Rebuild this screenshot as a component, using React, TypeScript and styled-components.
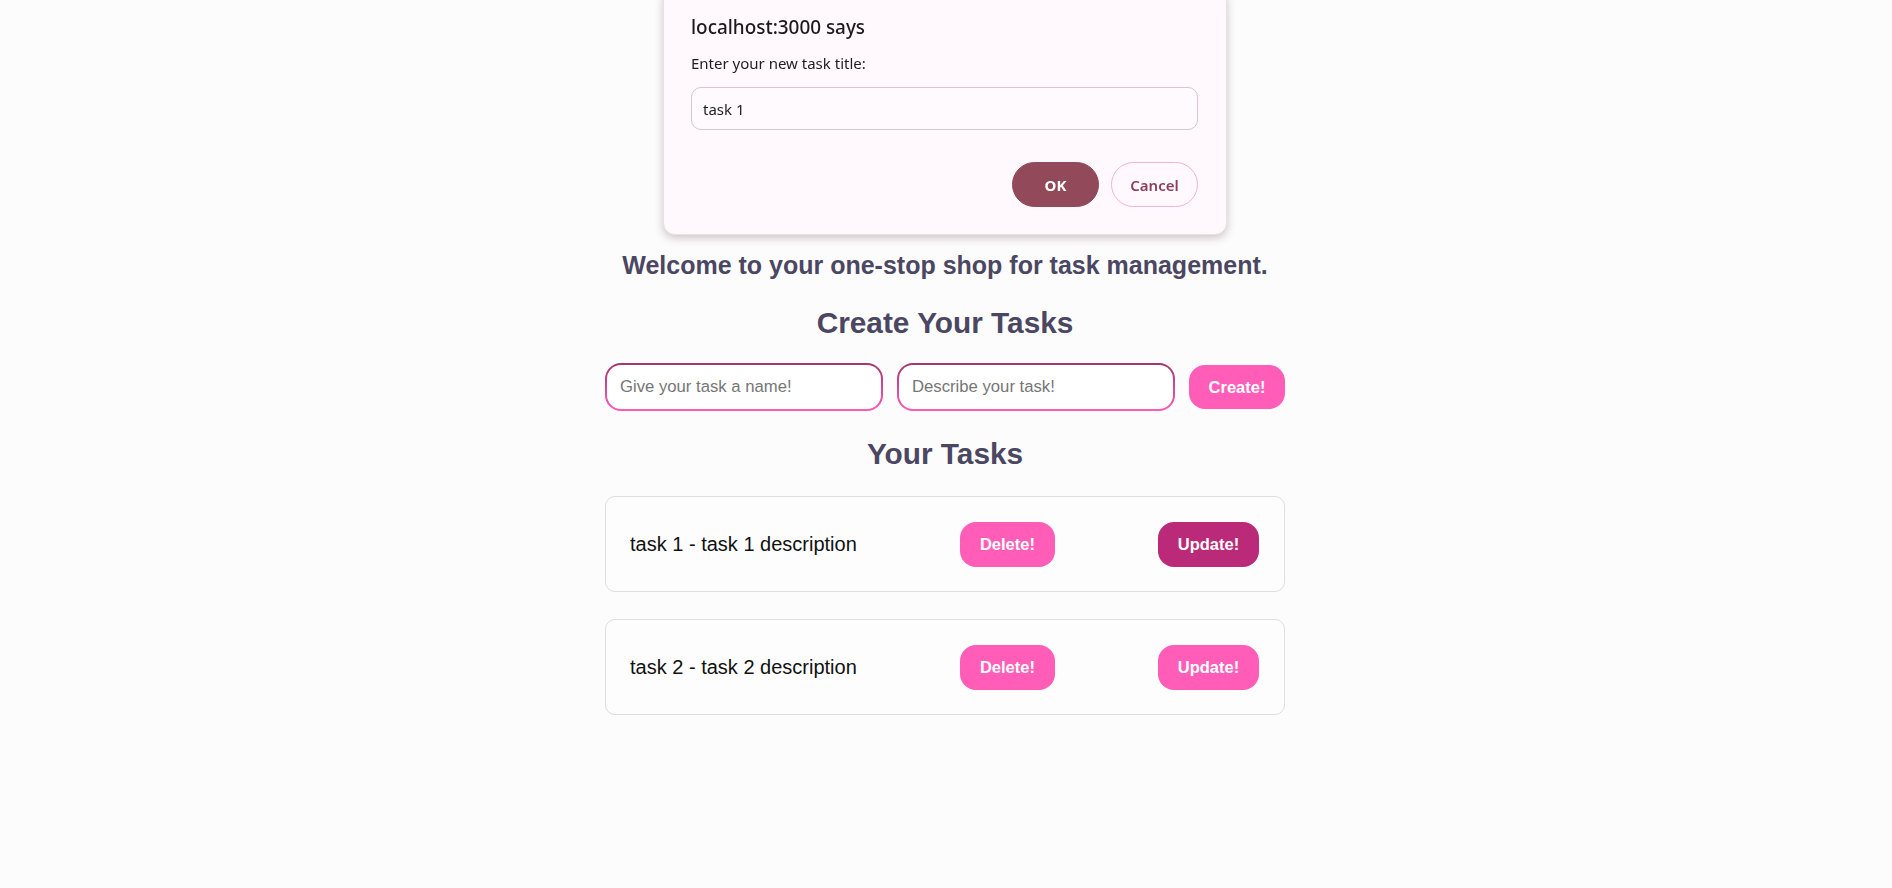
import React from "react";
import styled, { createGlobalStyle } from "styled-components";

const Global = createGlobalStyle`
  html, body { margin: 0; padding: 0; background: #fcfcfc; }
  body { font-family: "Liberation Sans", Arial, sans-serif; }
  * { box-sizing: border-box; }
`;

const Page = styled.main`
  min-height: 888px;
  display: flex;
  flex-direction: column;
  align-items: center;
  padding: 251px 2px 0 0;
`;

const Column = styled.div`
  width: 680px;
  display: flex;
  flex-direction: column;
  align-items: stretch;
`;

const Heading = styled.h2<{ $size: number; $lh: number; $mt: number }>`
  margin: ${(p) => p.$mt}px 0 0;
  font-family: "Liberation Sans", Arial, sans-serif;
  font-weight: 700;
  font-size: ${(p) => p.$size}px;
  line-height: ${(p) => p.$lh}px;
  color: #4b4762;
  text-align: center;
  white-space: nowrap;
`;

const Form = styled.form`
  margin-top: 24px;
  display: flex;
  align-items: center;
  gap: 14px;
`;

const TextField = styled.input`
  width: 278px;
  height: 48px;
  border: 2px solid transparent;
  border-radius: 16px;
  padding: 0 13px;
  font-family: "Liberation Sans", Arial, sans-serif;
  font-size: 16.7px;
  color: #222;
  outline: none;
  background:
    linear-gradient(#ffffff, #ffffff) padding-box,
    linear-gradient(180deg, #a0376c 0%, #d3478f 50%, #ff5cb8 100%) border-box;
  &::placeholder { color: #767676; }
`;

const PinkButton = styled.button<{ $active?: boolean; $w: number; $h?: number }>`
  width: ${(p) => p.$w}px;
  height: ${(p) => p.$h ?? 45}px;
  border: none;
  border-radius: 16px;
  background: ${(p) => (p.$active ? "#bb2a79" : "#ff5db7")};
  color: #ffffff;
  font-family: "Liberation Sans", Arial, sans-serif;
  font-weight: 700;
  font-size: 16.5px;
  cursor: pointer;
  flex: none;
`;

const TaskList = styled.ul`
  list-style: none;
  margin: 25px 0 0;
  padding: 0;
  display: flex;
  flex-direction: column;
  gap: 27px;
`;

const TaskCard = styled.li`
  height: 96px;
  border: 1px solid #dedede;
  border-radius: 10px;
  background: #fdfdfd;
  padding: 0 25px 0 24px;
  display: flex;
  align-items: center;
  justify-content: space-between;
`;

const TaskText = styled.span`
  font-family: "Liberation Sans", Arial, sans-serif;
  font-size: 20px;
  color: #111;
`;

/* Browser prompt dialog overlay */
const Dialog = styled.div`
  position: fixed;
  top: -11px;
  left: calc(50% - 283px);
  width: 564px;
  padding: 26px 28px 27px 27px;
  background: #fff8fc;
  border: 1px solid #eadfe3;
  border-radius: 12px;
  box-shadow: 0 3px 8px rgba(90, 50, 60, 0.28);
  font-family: "Noto Sans", "Open Sans", sans-serif;
  display: flex;
  flex-direction: column;
`;

const DialogTitle = styled.div`
  font-size: 18.9px;
  line-height: 22px;
  font-weight: 500;
  color: #1b1b1b;
`;

const DialogMessage = styled.div`
  margin-top: 15px;
  font-size: 15px;
  line-height: 20px;
  color: #1f1f1f;
`;

const DialogInput = styled.input`
  margin-top: 14px;
  height: 43px;
  width: 100%;
  border: 1px solid #d8c6cc;
  border-radius: 10px;
  background: #fffafd;
  padding: 0 11px;
  font-family: "Noto Sans", "Open Sans", sans-serif;
  font-size: 15px;
  color: #1f1f1f;
  outline: none;
`;

const DialogActions = styled.div`
  margin-top: 32px;
  display: flex;
  justify-content: flex-end;
  gap: 12px;
`;

const DialogButton = styled.button<{ $primary?: boolean }>`
  width: 87px;
  height: 45px;
  border-radius: 23px;
  font-family: "Noto Sans", "Open Sans", sans-serif;
  font-size: 15px;
  font-weight: ${(p) => (p.$primary ? 700 : 600)};
  border: 1px solid ${(p) => (p.$primary ? "#924a5b" : "#f6b6c9")};
  background: ${(p) => (p.$primary ? "#924a5b" : "transparent")};
  color: ${(p) => (p.$primary ? "#ffffff" : "#8b3f5c")};
  cursor: pointer;
`;

const tasks = [
  { id: 1, title: "task 1", description: "task 1 description" },
  { id: 2, title: "task 2", description: "task 2 description" },
];

export default function App() {
  return (
    <>
      <Global />
      <Page>
        <Column>
          <Heading as="h3" $size={25} $lh={29} $mt={0}>
            Welcome to your one-stop shop for task management.
          </Heading>
          <Heading $size={29.8} $lh={33} $mt={26}>
            Create Your Tasks
          </Heading>
          <Form onSubmit={(e) => e.preventDefault()}>
            <TextField placeholder="Give your task a name!" />
            <TextField placeholder="Describe your task!" />
            <PinkButton $w={96} $h={44}>Create!</PinkButton>
          </Form>
          <Heading $size={29.8} $lh={34} $mt={26}>
            Your Tasks
          </Heading>
          <TaskList>
            {tasks.map((t, i) => (
              <TaskCard key={t.id}>
                <TaskText>
                  {t.title} - {t.description}
                </TaskText>
                <PinkButton $w={95}>Delete!</PinkButton>
                <PinkButton $w={101} $active={i === 0}>
                  Update!
                </PinkButton>
              </TaskCard>
            ))}
          </TaskList>
        </Column>
      </Page>
      <Dialog role="dialog">
        <DialogTitle>localhost:3000 says</DialogTitle>
        <DialogMessage>Enter your new task title:</DialogMessage>
        <DialogInput defaultValue="task 1" />
        <DialogActions>
          <DialogButton $primary>OK</DialogButton>
          <DialogButton>Cancel</DialogButton>
        </DialogActions>
      </Dialog>
    </>
  );
}
